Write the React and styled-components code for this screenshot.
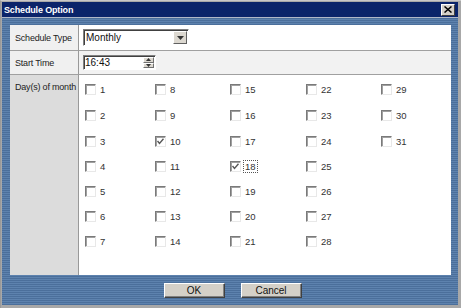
import React from 'react';
import styled, { createGlobalStyle } from 'styled-components';

const GlobalStyle = createGlobalStyle`
  html, body {
    margin: 0;
    padding: 0;
    background: #ffffff;
  }
  body {
    font-family: "Liberation Sans", Arial, sans-serif;
  }
`;

const Window = styled.div`
  width: 461px;
  height: 308px;
  box-sizing: border-box;
  display: flex;
  flex-direction: column;
  background: #a8a8a8;
  border-left: 1px solid #9a9a9a;
  border-top: 1px solid #c8c8c8;
  padding: 1px 3px 3px 1px;
`;

const TitleBar = styled.div`
  height: 15px;
  background: #0a246a;
  display: flex;
  align-items: center;
  justify-content: space-between;
  padding: 0 3px 0 2px;
  border-bottom: 1px solid #b0b8c8;
`;

const Title = styled.span`
  color: #ffffff;
  font-weight: bold;
  font-size: 9px;
  letter-spacing: -0.15px;
  white-space: nowrap;
`;

const CloseButton = styled.div`
  width: 14px;
  height: 12px;
  box-sizing: border-box;
  background: #d4d0c8;
  border: 1px solid;
  border-color: #ffffff #404040 #404040 #ffffff;
  display: flex;
  align-items: center;
  justify-content: center;
`;

const Body = styled.div`
  flex: 1;
  display: flex;
  flex-direction: column;
  padding: 7px 7px 0 8px;
  background: repeating-linear-gradient(
    to bottom,
    #4b6f9b 0px,
    #4b6f9b 1px,
    #5d82ae 1px,
    #5d82ae 2px
  );
`;

const Panel = styled.div`
  height: 250px;
  box-sizing: border-box;
  background: #ffffff;
  display: grid;
  grid-template-columns: 69px 1fr;
  grid-template-rows: 26px 24px 1fr;
`;

const LabelCell = styled.div`
  background: ${({ $bg }) => $bg};
  border-right: 1px solid #999999;
  border-bottom: ${({ $last }) => ($last ? 'none' : '1px solid #a0a0a0')};
  font-size: 9px;
  letter-spacing: -0.2px;
  white-space: nowrap;
  color: #222222;
  padding: ${({ $top }) => ($top ? '7px 0 0 5px' : '0 0 0 5px')};
  display: flex;
  align-items: ${({ $top }) => ($top ? 'flex-start' : 'center')};
`;

const ValueCell = styled.div`
  background: ${({ $bg }) => $bg};
  border-bottom: ${({ $last }) => ($last ? 'none' : '1px solid #a0a0a0')};
  display: flex;
  align-items: center;
  padding-left: 4px;
`;

const Select = styled.div`
  width: 106px;
  height: 17px;
  box-sizing: border-box;
  border: 1px solid;
  border-color: #808080 #ffffff #ffffff #808080;
  background: #ffffff;
  display: flex;
  align-items: stretch;
  box-shadow: inset 1px 1px 0 #404040;
`;

const SelectText = styled.span`
  flex: 1;
  font-size: 10px;
  color: #111111;
  padding: 0 0 0 2px;
  line-height: 15px;
`;

const ArrowButton = styled.div`
  width: 14px;
  margin: 1px 1px 1px 0;
  box-sizing: border-box;
  background: #dcd8d0;
  border: 1px solid;
  border-color: #ffffff #606060 #606060 #ffffff;
  display: flex;
  align-items: center;
  justify-content: center;
`;

const TimeBox = styled.div`
  width: 73px;
  height: 15px;
  box-sizing: border-box;
  border: 1px solid;
  border-color: #808080 #ffffff #ffffff #808080;
  box-shadow: inset 1px 1px 0 #404040;
  background: #ffffff;
  display: flex;
  align-items: stretch;
`;

const TimeText = styled.span`
  flex: 1;
  font-size: 10px;
  color: #111111;
  padding-left: 1px;
  line-height: 13px;
`;

const Spin = styled.div`
  width: 11px;
  display: flex;
  flex-direction: column;
  margin: 1px 1px 1px 0;
`;

const SpinPart = styled.div`
  flex: 1;
  box-sizing: border-box;
  background: #dcd8d0;
  border: 1px solid;
  border-color: #ffffff #707070 #707070 #ffffff;
  display: flex;
  align-items: center;
  justify-content: center;
`;

const DaysGrid = styled.div`
  display: grid;
  grid-template-columns: 70px 75px 76px 75px 60px;
  grid-template-rows: 26px 26px 25px 25px 25px 25px 25px;
  grid-auto-flow: column;
  padding: 8px 0 0 6px;
  align-content: start;
`;

const Day = styled.div`
  display: flex;
  align-items: center;
  height: 12px;
  gap: 3px;
  font-size: 9.5px;
  color: #333333;
`;

const Box = styled.div`
  width: 11px;
  height: 11px;
  box-sizing: border-box;
  border: 1px solid;
  border-color: #7a7a7a #e8e8e8 #e8e8e8 #7a7a7a;
  box-shadow: inset 1px 1px 0 #a0a0a0;
  background: #ffffff;
  display: flex;
  align-items: center;
  justify-content: center;
`;

const DayText = styled.span`
  line-height: 11px;
  padding: 0 1px;
  outline: ${({ $focus }) => ($focus ? '1px dotted #555555' : 'none')};
`;

const Footer = styled.div`
  flex: 1;
  display: flex;
  justify-content: center;
  align-items: flex-start;
  gap: 16px;
  padding-top: 8px;
  padding-left: 4px;
`;

const Button = styled.div`
  width: 61px;
  height: 15px;
  box-sizing: border-box;
  background: #d4d0c8;
  border: 1px solid;
  border-color: #ffffff #404040 #404040 #ffffff;
  box-shadow: inset -1px -1px 0 #808080;
  font-size: 10px;
  color: #111111;
  display: flex;
  align-items: center;
  justify-content: center;
`;

const DownTriangle = () => (
  <svg width="7" height="4" viewBox="0 0 7 4">
    <path d="M0 0 H7 L3.5 4 Z" fill="#333" />
  </svg>
);

const Tri = ({ up }) => (
  <svg width="5" height="3" viewBox="0 0 5 3">
    <path d={up ? 'M0 3 H5 L2.5 0 Z' : 'M0 0 H5 L2.5 3 Z'} fill="#333" />
  </svg>
);

const Check = () => (
  <svg width="7" height="7" viewBox="0 0 7 7">
    <path d="M0.5 3 L2.5 5.5 L6.5 0.8" stroke="#555" strokeWidth="1.4" fill="none" />
  </svg>
);

const checked = [10, 18];

export default function App() {
  const days = Array.from({ length: 31 }, (_, i) => i + 1);
  return (
    <>
      <GlobalStyle />
      <Window>
        <TitleBar>
          <Title>Schedule Option</Title>
          <CloseButton>
            <svg width="8" height="7" viewBox="0 0 8 7">
              <path d="M0.5 0.5 L7.5 6.5 M7.5 0.5 L0.5 6.5" stroke="#000" strokeWidth="1.5" />
            </svg>
          </CloseButton>
        </TitleBar>
        <Body>
          <Panel>
            <LabelCell $bg="#f0f0f0">Schedule Type</LabelCell>
            <ValueCell $bg="#ffffff">
              <Select>
                <SelectText>Monthly</SelectText>
                <ArrowButton>
                  <DownTriangle />
                </ArrowButton>
              </Select>
            </ValueCell>
            <LabelCell $bg="#f0f0f0">Start Time</LabelCell>
            <ValueCell $bg="#f2f2f2">
              <TimeBox>
                <TimeText>16:43</TimeText>
                <Spin>
                  <SpinPart><Tri up /></SpinPart>
                  <SpinPart><Tri /></SpinPart>
                </Spin>
              </TimeBox>
            </ValueCell>
            <LabelCell $bg="#dcdcdc" $top $last>Day(s) of month</LabelCell>
            <DaysGrid>
              {days.map((d) => (
                <Day key={d}>
                  <Box>{checked.includes(d) && <Check />}</Box>
                  <DayText $focus={d === 18}>{d}</DayText>
                </Day>
              ))}
            </DaysGrid>
          </Panel>
          <Footer>
            <Button>OK</Button>
            <Button>Cancel</Button>
          </Footer>
        </Body>
      </Window>
    </>
  );
}
